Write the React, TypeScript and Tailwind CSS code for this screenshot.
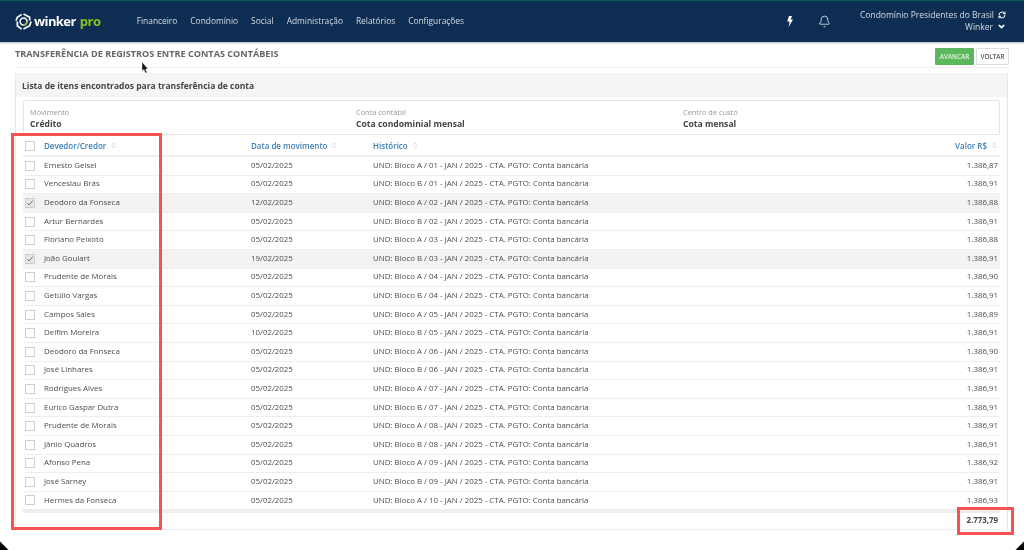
import { Bell, ChevronDown, ChevronsUpDown, RefreshCw } from "lucide-react";

const rows = [
  ["Ernesto Geisel", "05/02/2025", "UND: Bloco A / 01 - JAN / 2025 - CTA. PGTO: Conta bancária", "1.386,87"],
  ["Venceslau Brás", "05/02/2025", "UND: Bloco B / 01 - JAN / 2025 - CTA. PGTO: Conta bancária", "1.386,91"],
  ["Deodoro da Fonseca", "12/02/2025", "UND: Bloco A / 02 - JAN / 2025 - CTA. PGTO: Conta bancária", "1.386,88", true],
  ["Artur Bernardes", "05/02/2025", "UND: Bloco B / 02 - JAN / 2025 - CTA. PGTO: Conta bancária", "1.386,91"],
  ["Floriano Peixoto", "05/02/2025", "UND: Bloco A / 03 - JAN / 2025 - CTA. PGTO: Conta bancária", "1.386,88"],
  ["João Goulart", "19/02/2025", "UND: Bloco B / 03 - JAN / 2025 - CTA. PGTO: Conta bancária", "1.386,91", true],
  ["Prudente de Morais", "05/02/2025", "UND: Bloco A / 04 - JAN / 2025 - CTA. PGTO: Conta bancária", "1.386,90"],
  ["Getúlio Vargas", "05/02/2025", "UND: Bloco B / 04 - JAN / 2025 - CTA. PGTO: Conta bancária", "1.386,91"],
  ["Campos Sales", "05/02/2025", "UND: Bloco A / 05 - JAN / 2025 - CTA. PGTO: Conta bancária", "1.386,89"],
  ["Delfim Moreira", "10/02/2025", "UND: Bloco B / 05 - JAN / 2025 - CTA. PGTO: Conta bancária", "1.386,91"],
  ["Deodoro da Fonseca", "05/02/2025", "UND: Bloco A / 06 - JAN / 2025 - CTA. PGTO: Conta bancária", "1.386,90"],
  ["José Linhares", "05/02/2025", "UND: Bloco B / 06 - JAN / 2025 - CTA. PGTO: Conta bancária", "1.386,91"],
  ["Rodrigues Alves", "05/02/2025", "UND: Bloco A / 07 - JAN / 2025 - CTA. PGTO: Conta bancária", "1.386,91"],
  ["Eurico Gaspar Dutra", "05/02/2025", "UND: Bloco B / 07 - JAN / 2025 - CTA. PGTO: Conta bancária", "1.386,91"],
  ["Prudente de Morais", "05/02/2025", "UND: Bloco A / 08 - JAN / 2025 - CTA. PGTO: Conta bancária", "1.386,91"],
  ["Jânio Quadros", "05/02/2025", "UND: Bloco B / 08 - JAN / 2025 - CTA. PGTO: Conta bancária", "1.386,91"],
  ["Afonso Pena", "05/02/2025", "UND: Bloco A / 09 - JAN / 2025 - CTA. PGTO: Conta bancária", "1.386,92"],
  ["José Sarney", "05/02/2025", "UND: Bloco B / 09 - JAN / 2025 - CTA. PGTO: Conta bancária", "1.386,91"],
  ["Hermes da Fonseca", "05/02/2025", "UND: Bloco A / 10 - JAN / 2025 - CTA. PGTO: Conta bancária", "1.386,93"],
] as const;

const menu = ["Financeiro", "Condomínio", "Social", "Administração", "Relatórios", "Configurações"];

function Logo() {
  return (
    <svg width="17" height="17" viewBox="0 0 18 18" fill="none">
      <path d="M9 1 L15.5 4.5 V8 M17 9 L15.5 13.5 L9 17 M7 17 L2.5 13.5 V9 M1 8 L2.5 4.5 L7 1.5" stroke="#fff" strokeWidth="1.8" />
      <circle cx="9" cy="9" r="3.6" stroke="#fff" strokeWidth="1.6" />
      <path d="M9 12.6 A3.6 3.6 0 0 0 12.6 9" stroke="#8cc21f" strokeWidth="1.8" />
    </svg>
  );
}

function Bolt() {
  return (
    <svg width="6" height="11" viewBox="0 0 6 11" className="ml-auto">
      <path d="M2 0 H5 L3.6 3.6 H6 L1.6 11 L2.6 5.4 H0.2 Z" fill="#fff" />
    </svg>
  );
}

function Check({ on }: { on?: boolean }) {
  return (
    <span className={`flex h-[10px] w-[10px] items-center justify-center border border-[#cfcfcf] ${on ? "bg-[#e6e6e6]" : "bg-white"}`}>
      {on && (
        <svg width="8" height="8" viewBox="0 0 8 8" fill="none">
          <path d="M1.2 4.2 L3.1 6 L6.8 1.6" stroke="#777" strokeWidth="1" />
        </svg>
      )}
    </span>
  );
}

function Sort() {
  return <ChevronsUpDown size={7} strokeWidth={2} className="ml-[4px] text-[#a9b4bf]" />;
}

export default function App() {
  return (
    <div className="relative h-[550px] w-[1024px] overflow-hidden bg-white font-['Open_Sans',sans-serif] text-[#555] blur-[0.4px]">
      {/* top bar */}
      <header className="flex h-[42px] items-center border-t border-[#0b5a5a] bg-[#0d2d52] pr-[18px] pl-[15px] shadow-[0_1px_2px_rgba(0,0,0,0.3)]">
        <Logo />
        <span className="ml-[2px] text-[13px] leading-none font-bold tracking-[-0.6px] text-white">winker</span>
        <span className="ml-[4px] text-[13px] leading-none font-bold tracking-[-0.4px] text-[#8cc21f]">pro</span>
        <nav className="ml-[36px] flex gap-[13px] text-[8.4px] text-[#d5dde6]">
          {menu.map((m) => (
            <span key={m}>{m}</span>
          ))}
        </nav>
        <Bolt />
        <Bell size={13} strokeWidth={1.5} className="ml-[25px] text-[#e8edf2]" />
        <div className="mb-[2px] ml-[29px] flex flex-col items-end gap-[1px] text-[8.5px] leading-[11px] text-[#d5dde6]">
          <span className="flex items-center gap-[4px]">
            Condomínio Presidentes do Brasil <RefreshCw size={8} strokeWidth={3} className="text-white" />
          </span>
          <span className="flex items-center gap-[4px]">
            Winker <ChevronDown size={9} strokeWidth={4} className="text-white" />
          </span>
        </div>
      </header>

      <main className="px-[15px]">
        {/* title row */}
        <div className="flex h-[26px] items-center justify-between border-b border-[#eee]">
          <h1 className="mb-[1px] text-[9.1px] font-bold text-[#666]">TRANSFERÊNCIA DE REGISTROS ENTRE CONTAS CONTÁBEIS</h1>
          <div className="mt-[4px] flex gap-[2px]">
            <span className="flex h-[17px] w-[39px] items-center justify-center rounded-[1px] bg-[#5cb85c] text-[6.3px] font-semibold text-[#e6f5e6]">AVANCAR</span>
            <span className="flex h-[17px] w-[33px] items-center justify-center rounded-[1px] border border-[#ddd] bg-white text-[6.3px] font-semibold text-[#555]">VOLTAR</span>
          </div>
        </div>

        {/* panel */}
        <section className="mt-[5px] w-[993px] border-r border-l border-[#e8e8e8] pb-[1px]">
          <div className="flex h-[24px] items-center bg-[#f5f5f5] px-[6px] pt-[2px] text-[8.5px] font-bold text-[#444]">
            Lista de itens encontrados para transferência de conta
          </div>
          <div className="px-[7px] pt-[3px]">
            <div className="grid h-[35px] grid-cols-[326px_327px_1fr] items-center rounded-[2px] border border-[#e5e5e5] px-[6px] pt-[1px]">
              <div>
                <div className="text-[7.4px] leading-[11px] text-[#999]">Movimento</div>
                <div className="text-[8.6px] leading-[12px] font-bold text-[#444]">Crédito</div>
              </div>
              <div>
                <div className="text-[7.4px] leading-[11px] text-[#999]">Conta contábil</div>
                <div className="text-[8.6px] leading-[12px] font-bold text-[#444]">Cota condominial mensal</div>
              </div>
              <div>
                <div className="text-[7.4px] leading-[11px] text-[#999]">Centro de custo</div>
                <div className="text-[8.6px] leading-[12px] font-bold text-[#444]">Cota mensal</div>
              </div>
            </div>

            {/* table */}
            <div className="flex h-[22px] items-center border-b-2 border-[#eee] pt-[1px] text-[8px] font-semibold text-[#3f7fb5]">
              <span className="ml-[2px] w-[19px]"><Check /></span>
              <span className="flex w-[207px] items-center">Devedor/Credor <Sort /></span>
              <span className="flex w-[122px] items-center">Data de movimento <Sort /></span>
              <span className="flex items-center">Histórico <Sort /></span>
              <span className="mr-[2px] ml-auto flex items-center">Valor R$ <Sort /></span>
            </div>
            {rows.map((r, i) => (
              <div key={i} className={`flex h-[18.6px] items-center border-b border-[#eee] text-[7.9px] text-[#4d4d4d] ${r[4] ? "bg-[#f3f3f3]" : ""}`}>
                <span className="ml-[2px] w-[19px]"><Check on={!!r[4]} /></span>
                <span className="w-[207px]">{r[0]}</span>
                <span className="w-[122px]">{r[1]}</span>
                <span>{r[2]}</span>
                <span className="mr-[2px] ml-auto">{r[3]}</span>
              </div>
            ))}
            <div className="flex h-[20px] items-center justify-end border-t-[3px] border-b border-t-[#eee] border-b-[#eee] pr-[2px] text-[7.9px] font-bold text-[#444]">
              2.773,79
            </div>
          </div>
        </section>
      </main>

      {/* red annotations */}
      <div className="absolute top-[133px] left-[11px] h-[397px] w-[151px] border-[3px] border-[#f55353]" />
      <div className="absolute top-[507px] left-[957px] h-[28px] w-[57px] border-[3px] border-[#f55353]" />

      {/* mouse cursor */}
      <svg className="absolute top-[62px] left-[141px]" width="8" height="12" viewBox="0 0 8 12">
        <path d="M1 0 V9 L3 7.4 L4.4 11 L6 10.4 L4.6 7 H7 Z" fill="#111" stroke="#fff" strokeWidth="0.4" />
      </svg>

      {/* window corners */}
      <div className="absolute bottom-[-6px] left-[-6px] h-[12px] w-[12px] rotate-45 bg-black" />
      <div className="absolute right-[-6px] bottom-[-6px] h-[12px] w-[12px] rotate-45 bg-black" />
    </div>
  );
}
